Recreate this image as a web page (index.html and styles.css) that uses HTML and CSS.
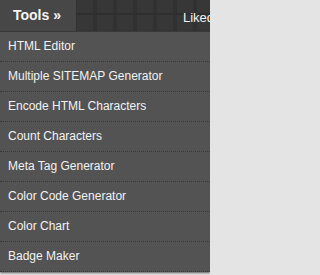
FILE: index.html
```html
<!DOCTYPE html>
<html>
<head>
<meta charset="utf-8">
<link rel="stylesheet" href="styles.css">
</head>
<body>
<div class="page">
  <div class="topbar">
    <div class="tab">Tools »</div>
    <div class="pattern"></div>
    <div class="nav-item">Liked</div>
  </div>
  <ul class="menu">
    <li>HTML Editor</li>
    <li>Multiple SITEMAP Generator</li>
    <li>Encode HTML Characters</li>
    <li>Count Characters</li>
    <li>Meta Tag Generator</li>
    <li>Color Code Generator</li>
    <li>Color Chart</li>
    <li>Badge Maker</li>
  </ul>
</div>
</body>
</html>
```
FILE: styles.css
```css
html, body {
  margin: 0;
  padding: 0;
}
body {
  background: #e4e4e4;
  font-family: "Liberation Sans", Arial, sans-serif;
  overflow: hidden;
}
.page {
  width: 210px;
  height: 275px;
  overflow: hidden;
}
.topbar {
  display: flex;
  height: 31px;
  background-color: #303030;
  background-image:
    linear-gradient(180deg, transparent 0 13px, #2e2e2e 13px 15px, transparent 15px),
    linear-gradient(90deg, #373737 0 16px, #313131 16px 20px);
  background-size: 100% 100%, 20px 100%;
  background-position: 0 0, 77px 0;
  border-bottom: 1px solid #3c3c3c;
}
.tab {
  width: 63px;
  padding-left: 13px;
  flex: none;
  background: #474747;
  color: #f4f4f4;
  font-weight: bold;
  font-size: 14px;
  line-height: 31px;
}
.pattern {
  flex: 1;
}
.nav-item {
  width: 27px;
  flex: none;
  color: #f4f4f4;
  font-size: 13px;
  line-height: 36px;
  white-space: nowrap;
  overflow: hidden;
}
.menu {
  list-style: none;
  margin: 0;
  padding: 0;
  background: #535353;
  box-shadow: 0 1px 2px rgba(0,0,0,0.6);
}
.menu li {
  height: 29px;
  line-height: 29px;
  padding-left: 8px;
  color: #f2f2f2;
  font-size: 12px;
  border-bottom: 1px dotted #363636;
  white-space: nowrap;
}
```
